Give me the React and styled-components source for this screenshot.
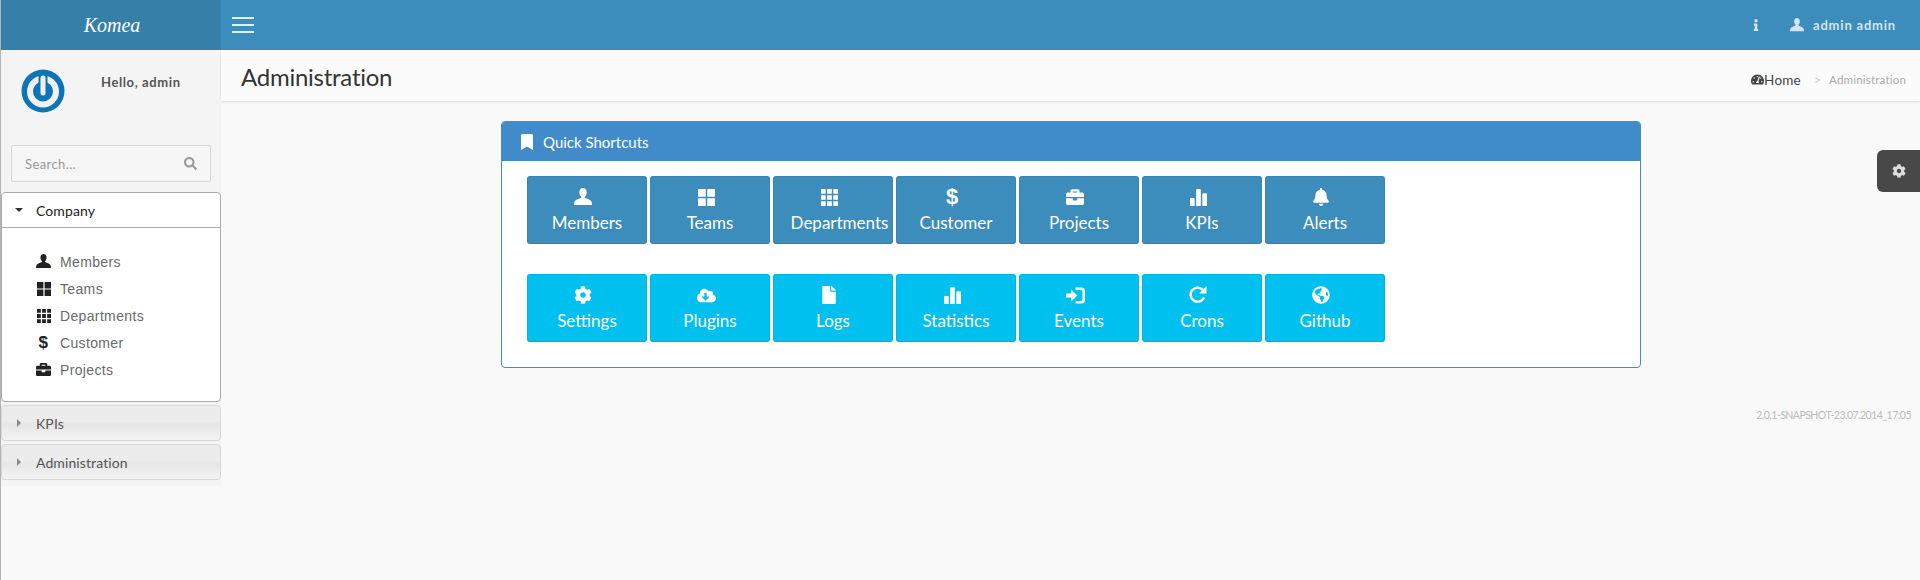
import React from "react";
import styled, { createGlobalStyle } from "styled-components";
import { FaBell, FaBookmark, FaBriefcase, FaCloudDownloadAlt, FaCog, FaFile, FaGlobeAmericas, FaInfo, FaSearch, FaTachometerAlt } from "react-icons/fa";

const Global = createGlobalStyle`
  html, body { margin: 0; padding: 0; height: 100%; background: #f9f9f9; overflow: hidden; }
  * { box-sizing: border-box; }
  body { font-family: "Lato", "Noto Sans", sans-serif; color: #333; }
`;

const Page = styled.div`
  min-height: 580px; position: relative; border-left: 1px solid #b4b4b4; display: flex; flex-direction: column;
`;
const TopBar = styled.header`display: flex; height: 50px; background: #3c8dbc; color: #fff;`;
const Logo = styled.div`
  width: 220px; background: #367fa9; display: flex; align-items: center; justify-content: center;
  font: italic 20px "Liberation Serif", serif; color: #fff; padding: 1px 0 0 2px;
`;
const NavBar = styled.div`flex: 1; display: flex; align-items: center; justify-content: space-between; padding: 0 24px 0 11px;`;
const Burger = styled.div`
  width: 22px; display: flex; flex-direction: column; gap: 5px;
  span { display: block; height: 2px; background: #e3eff6; }
`;
const NavRight = styled.div`display: flex; align-items: center; color: #d3e5f0; font-size: 13px; font-weight: 700; letter-spacing: .8px;`;
const NavInfo = styled.span`display: flex; margin-right: 28px;`;
const NavUser = styled.span`display: flex; align-items: center; gap: 9px;`;

const Layout = styled.div`display: flex; align-items: flex-start; flex: 1;`;
const Sidebar = styled.aside`width: 220px; height: 436px; background: #f4f4f4;`;
const UserBox = styled.div`display: flex; height: 95px; padding: 19px 0 0 20px;`;
const Hello = styled.div`margin: 5px 0 0 36px; font-size: 13px; font-weight: 700; color: #555; letter-spacing: .6px;`;
const SearchBox = styled.div`
  margin: 0 10px 10px; height: 37px; display: flex; align-items: center; justify-content: space-between;
  padding: 0 13px; background: #f6f6f6; border: 1px solid #d8d8d8; border-radius: 2px;
  color: #999; font-size: 13px; letter-spacing: .4px;
`;
const Accordion = styled.div`display: flex; flex-direction: column; gap: 3px;`;
const Section = styled.section`
  border: 1px solid ${p => (p.$open ? "#aaa" : "#d8d8d8")}; border-radius: 4px; overflow: hidden;
  background: ${p => (p.$open ? "#fff" : "linear-gradient(#ececec 45%, #e6e6e6 55%, #f4f4f4 100%)")};
`;
const SectionHead = styled.div`
  height: ${p => (p.$open ? "35px" : "34px")}; display: flex; align-items: center; padding-left: 34px; position: relative;
  font-size: 14px; letter-spacing: .1px; color: ${p => (p.$open ? "#222" : "#555")};
  border-bottom: ${p => (p.$open ? "1px solid #aaa" : "none")};
`;
const Caret = styled.span`
  position: absolute; left: 13px; top: 50%; width: 0; height: 0;
  ${p => p.$open
    ? "margin-top: -2px; border-left: 4px solid transparent; border-right: 4px solid transparent; border-top: 4px solid #333;"
    : "margin-top: -4px; margin-left: 2px; border-top: 4px solid transparent; border-bottom: 4px solid transparent; border-left: 4px solid #888;"}
`;
const ItemList = styled.ul`list-style: none; margin: 0; padding: 20px 0 18px 34px;`;
const Item = styled.li`
  height: 27px; display: flex; align-items: center; gap: 9px;
  font: 14px "Liberation Sans", sans-serif; letter-spacing: .35px; color: #6a6a6a;
`;
const ItemIcon = styled.span`width: 15px; display: flex; justify-content: center; color: #222; font: 700 17px "Liberation Sans", sans-serif;`;

const Main = styled.main`flex: 1; min-width: 0; display: flex; flex-direction: column;`;
const PageHead = styled.div`
  height: 51px; background: #fbfbfb; display: flex; align-items: center; justify-content: space-between;
  padding: 2px 14px 0 20px; box-shadow: 0 1px 2px rgba(0,0,0,.12);
`;
const Title = styled.h1`margin: 0; font-size: 24px; font-weight: 400; color: #333; letter-spacing: -.25px;`;
const Crumbs = styled.div`display: flex; align-items: center; font-size: 11.5px; color: #aaa; padding-top: 6px; letter-spacing: .2px;`;
const Home = styled.span`display: flex; align-items: center; color: #444; font-size: 13.5px;`;
const Sep = styled.span`margin: 0 8px 0 13px; color: #ccc; font-size: 12px;`;

const Panel = styled.section`
  width: 1140px; margin: 20px 0 0 280px; background: #fff; border: 1px solid #428bca; border-radius: 4px; overflow: hidden;
`;
const PanelHead = styled.div`
  height: 39px; background: #428bca; color: #fff; display: flex; align-items: center; gap: 8px; padding-left: 17px;
  font-size: 15px;
`;
const PanelBody = styled.div`padding: 15px 0 25px 25px; display: flex; flex-direction: column; gap: 30px;`;
const Row = styled.div`display: grid; grid-template-columns: repeat(7, 120px); gap: 3px; justify-content: start;`;
const Shortcut = styled.a`
  height: 68px; display: flex; flex-direction: column; align-items: center; padding-top: 11px; gap: 6px;
  border-radius: 3px; color: #fff; font-size: 17px; white-space: nowrap;
  background: ${p => (p.$tone === "info" ? "#00c0ef" : "#3c8dbc")};
  border: 1px solid ${p => (p.$tone === "info" ? "#00b4e0" : "#3a86b3")};
  border-bottom-color: ${p => (p.$tone === "info" ? "#00acd6" : "#367fa9")};
`;
const ShortcutIcon = styled.span`
  height: 18px; margin-right: 8px; display: flex; align-items: center; justify-content: center;
  font: 700 22px "Liberation Sans", sans-serif; line-height: 18px;
`;
const ShortcutLabel = styled.span`margin-left: ${p => p.$push || 0}px;`;
const Version = styled.div`margin: 41px 9px 0 0; text-align: right; font-size: 10.5px; color: #bbb; letter-spacing: -.52px;`;
const SettingsTab = styled.div`
  position: absolute; right: 0; top: 150px; width: 43px; height: 42px; background: #484848; color: #ddd;
  border-radius: 6px 0 0 6px; display: flex; align-items: center; justify-content: center; font-size: 14px;
`;

const User = ({ s = 16 }) => (
  <svg width={s} height={s} viewBox="0 0 16 16" fill="currentColor"><path d="M8 0c2 0 3.3 1.5 3.3 3.8 0 1.6-.7 3-1.6 3.9-.3.4-.2 1 .3 1.2 2.2.9 5 1.6 5.6 3.4.2.7.4 1.7.4 2.7H0c0-1 .2-2 .4-2.7.6-1.8 3.4-2.5 5.6-3.4.5-.2.6-.8.3-1.2C5.4 6.8 4.7 5.4 4.7 3.8 4.7 1.5 6 0 8 0z" /></svg>
);
const Large = ({ s = 16 }) => (
  <svg width={s} height={s} viewBox="0 0 16 16" fill="currentColor"><path d="M0 0h7.300v7.300H0zM8.700 0H16v7.300H8.700zM0 8.700h7.300V16H0zM8.700 8.700H16V16H8.700z" /></svg>
);
const Nine = ({ s = 16 }) => (
  <svg width={s} height={s} viewBox="0 0 16 16" fill="currentColor"><path d="M0 0h4.400v4.400H0zM5.800 0h4.400v4.400H5.800zM11.600 0H16v4.400h-4.400zM0 5.800h4.400v4.400H0zM5.800 5.800h4.400v4.400H5.800zM11.600 5.800H16v4.400h-4.400zM0 11.600h4.400V16H0zM5.800 11.600h4.400V16H5.800zM11.600 11.600H16V16h-4.400z" /></svg>
);
const Bars = ({ s = 16 }) => (
  <svg width={s} height={s} viewBox="0 0 16 16" fill="currentColor"><path d="M0 9.500q0-1 1-1h2.400q1 0 1 1V16H0zM5.800 1q0-1 1-1h2.400q1 0 1 1v15H5.800zM11.600 5q0-1 1-1H15q1 0 1 1v11h-4.400z" /></svg>
);
const SignIn = ({ s = 19 }) => (
  <svg width={s} height={s} viewBox="0 0 18 18" fill="currentColor"><path d="M0 7h5V3.600L10.800 9 5 14.400V11H0z" /><path d="M9 1.500h5.500Q18 1.500 18 5v8q0 3.500-3.500 3.500H9v-2.300h5q1.600 0 1.600-1.700V5.500q0-1.700-1.600-1.700H9z" /></svg>
);
const Refresh = ({ s = 18 }) => (
  <svg width={s} height={s} viewBox="0 0 18 18" fill="none" stroke="currentColor" strokeWidth="2.400"><path d="M15 11.500A7 7 0 1 1 13.500 3.600" /><path d="M17.500 0v7.500H10z" fill="currentColor" stroke="none" /></svg>
);
const PowerLogo = () => (
  <svg width="44" height="44" viewBox="0 0 44 44">
    <circle cx="22" cy="22" r="21.500" fill="#0d74ba" />
    <circle cx="22" cy="22.500" r="13" fill="none" stroke="#f1f1f1" strokeWidth="6" />
    <path d="M22 6v18" stroke="#0d74ba" strokeWidth="9" />
    <path d="M22 9v15" stroke="#f1f1f1" strokeWidth="5" strokeLinecap="round" />
  </svg>
);
const Dollar = () => <span>$</span>;

const sideItems = [
  ["Members", <User s={15} />], ["Teams", <Large s={14} />], ["Departments", <Nine s={14} />],
  ["Customer", <Dollar />], ["Projects", <FaBriefcase size={15} />],
];
const rowOne = [
  ["Members", <User s={18} />], ["Teams", <Large s={17} />], ["Departments", <Nine s={17} />, 13],
  ["Customer", <Dollar />], ["Projects", <FaBriefcase size={18} />], ["KPIs", <Bars s={17} />], ["Alerts", <FaBell size={18} />],
];
const rowTwo = [
  ["Settings", <FaCog size={18} />], ["Plugins", <FaCloudDownloadAlt size={19} />], ["Logs", <FaFile size={18} />],
  ["Statistics", <Bars s={17} />], ["Events", <SignIn />], ["Crons", <Refresh />], ["Github", <FaGlobeAmericas size={18} />],
];

const ShortcutRow = ({ items, tone }) => (
  <Row>
    {items.map(([label, icon, push]) => (
      <Shortcut key={label} $tone={tone}>
        <ShortcutIcon>{icon}</ShortcutIcon>
        <ShortcutLabel $push={push}>{label}</ShortcutLabel>
      </Shortcut>
    ))}
  </Row>
);

export default function App() {
  return (
    <Page>
      <Global />
      <TopBar>
        <Logo>Komea</Logo>
        <NavBar>
          <Burger><span /><span /><span /></Burger>
          <NavRight>
            <NavInfo><FaInfo size={12} /></NavInfo>
            <NavUser><User s={14} />admin admin</NavUser>
          </NavRight>
        </NavBar>
      </TopBar>
      <Layout>
        <Sidebar>
          <UserBox><PowerLogo /><Hello>Hello, admin</Hello></UserBox>
          <SearchBox>Search...<FaSearch size={13} /></SearchBox>
          <Accordion>
            <Section $open>
              <SectionHead $open><Caret $open />Company</SectionHead>
              <ItemList>
                {sideItems.map(([label, icon]) => (
                  <Item key={label}><ItemIcon>{icon}</ItemIcon>{label}</Item>
                ))}
              </ItemList>
            </Section>
            <Section><SectionHead><Caret />KPIs</SectionHead></Section>
            <Section><SectionHead><Caret />Administration</SectionHead></Section>
          </Accordion>
        </Sidebar>
        <Main>
          <PageHead>
            <Title>Administration</Title>
            <Crumbs><Home><FaTachometerAlt size={13} />Home</Home><Sep>&gt;</Sep>Administration</Crumbs>
          </PageHead>
          <Panel>
            <PanelHead><FaBookmark size={16} />Quick Shortcuts</PanelHead>
            <PanelBody>
              <ShortcutRow items={rowOne} />
              <ShortcutRow items={rowTwo} tone="info" />
            </PanelBody>
          </Panel>
          <Version>2.0.1-SNAPSHOT-23.07.2014_17:05</Version>
        </Main>
      </Layout>
      <SettingsTab><FaCog /></SettingsTab>
    </Page>
  );
}
